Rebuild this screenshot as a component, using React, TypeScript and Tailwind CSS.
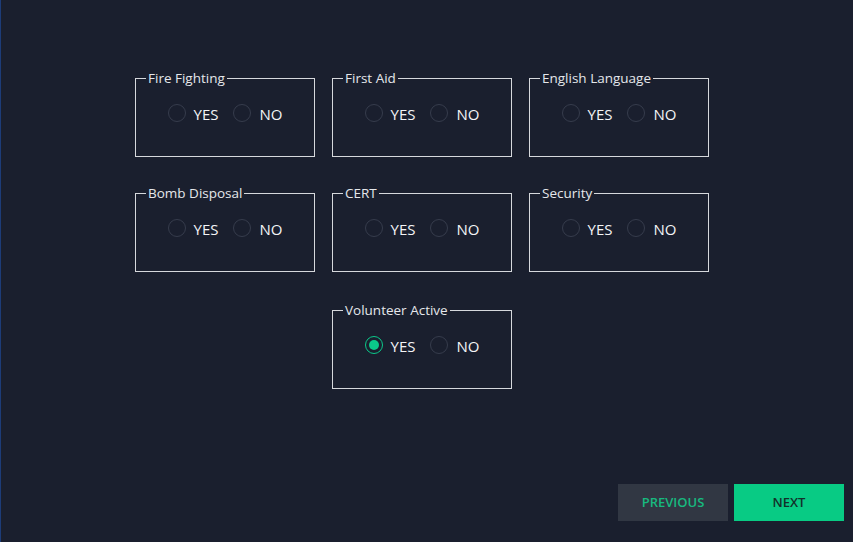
import { useState } from "react";

const skills = [
  "Fire Fighting",
  "First Aid",
  "English Language",
  "Bomb Disposal",
  "CERT",
  "Security",
];

function Radio({ checked, label, onClick }: { checked: boolean; label: string; onClick: () => void }) {
  return (
    <button onClick={onClick} className="flex items-center gap-[8px] text-[15px] font-medium text-gray-100">
      <span
        className={`w-[18px] h-[18px] rounded-full border flex items-center justify-center ${
          checked ? "border-[#0bc98a]" : "border-[#363c4c]"
        }`}
      >
        {checked && <span className="w-[10px] h-[10px] rounded-full bg-[#0bc98a]" />}
      </span>
      <span className="mt-[2px]">{label}</span>
    </button>
  );
}

function Question({ title, value, onChange }: { title: string; value: string; onChange: (v: string) => void }) {
  return (
    <fieldset className="w-[180px] h-[87px] border border-[#d6d8dc] px-[10px] pb-[12px] flex flex-col">
      <legend className="text-[13.5px] font-medium text-gray-200 px-[2px] leading-[16px]">{title}</legend>
      <div className="flex-1 flex items-center justify-center gap-[15px] pb-[4px]">
        <Radio checked={value === "yes"} label="YES" onClick={() => onChange("yes")} />
        <Radio checked={value === "no"} label="NO" onClick={() => onChange("no")} />
      </div>
    </fieldset>
  );
}

export default function App() {
  const [answers, setAnswers] = useState<Record<string, string>>({ "Volunteer Active": "yes" });
  const set = (k: string) => (v: string) => setAnswers({ ...answers, [k]: v });

  return (
    <div
      className="w-[853px] h-[542px] bg-[#1a1f2e] border-l border-[#1d3c78] flex flex-col"
      style={{ fontFamily: '"Open Sans", "Noto Sans", sans-serif' }}
    >
      <div className="pt-[70px] pl-[134px] grid grid-cols-[180px_180px_180px] gap-x-[17px] gap-y-[28px]">
        {skills.map((s, i) => (
          <div key={s} className={i >= 3 ? "mb-[2px]" : ""}>
            <Question title={s} value={answers[s] ?? ""} onChange={set(s)} />
          </div>
        ))}
        <div />
        <Question title="Volunteer Active" value={answers["Volunteer Active"] ?? ""} onChange={set("Volunteer Active")} />
      </div>
      <div className="mt-auto flex justify-end gap-[6px] pr-[9px] pb-[21px]">
        <button className="w-[110px] h-[37px] bg-[#313743] text-[#17b97f] text-[13px] font-semibold">PREVIOUS</button>
        <button className="w-[110px] h-[37px] bg-[#08cb84] text-[#13302a] text-[13px] font-semibold">NEXT</button>
      </div>
    </div>
  );
}
